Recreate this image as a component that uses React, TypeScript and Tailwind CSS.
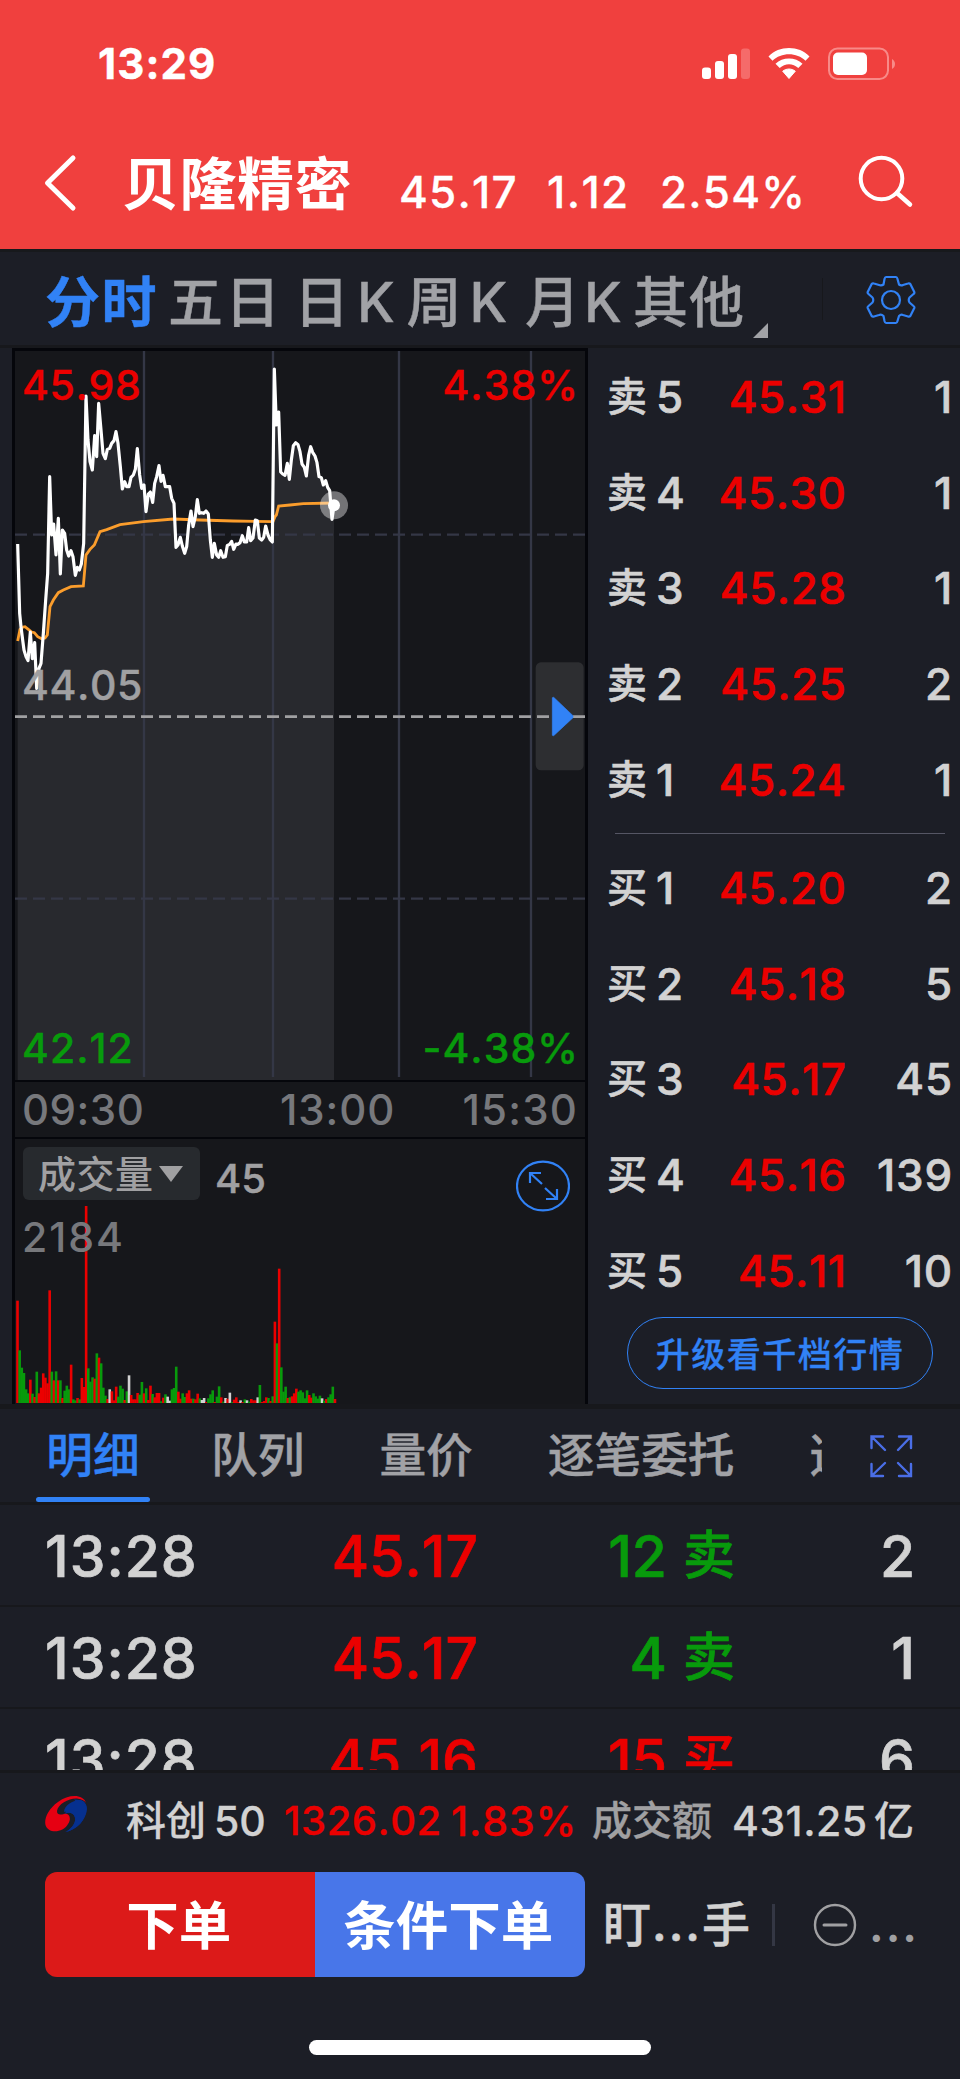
import type { ReactNode } from 'react';

type Level = { label: string; no: string; price: string; volume: string };

const SELL_LEVELS: Level[] = [
  { label: '卖', no: '5', price: '45.31', volume: '1' },
  { label: '卖', no: '4', price: '45.30', volume: '1' },
  { label: '卖', no: '3', price: '45.28', volume: '1' },
  { label: '卖', no: '2', price: '45.25', volume: '2' },
  { label: '卖', no: '1', price: '45.24', volume: '1' },
];

const BUY_LEVELS: Level[] = [
  { label: '买', no: '1', price: '45.20', volume: '2' },
  { label: '买', no: '2', price: '45.18', volume: '5' },
  { label: '买', no: '3', price: '45.17', volume: '45' },
  { label: '买', no: '4', price: '45.16', volume: '139' },
  { label: '买', no: '5', price: '45.11', volume: '10' },
];

const TRADES = [
  { time: '13:28', price: '45.17', amount: '12', side: '卖', count: '2' },
  { time: '13:28', price: '45.17', amount: '4', side: '卖', count: '1' },
  { time: '13:28', price: '45.16', amount: '15', side: '买', count: '6' },
];

// 分时价格线
const PRICE_POINTS =
  '53,612 59,820 63,860 68,900 72,930 78,950 84,962 91,876 97,956 104,908 110,1045 117,985 123,970 130,880 137,780 143,700 149,410 155,585 161,552 168,645 175,535 181,702 187,570 194,580 200,630 206,648 213,632 219,650 226,706 232,682 238,690 244,672 251,610 258,168 264,300 270,365 277,390 284,287 290,350 296,190 303,270 309,340 316,356 322,328 329,325 335,310 342,302 348,275 354,310 361,380 367,447 374,425 380,440 387,440 393,412 400,405 406,388 412,326 419,405 425,445 432,435 438,515 445,462 451,456 458,487 464,430 470,410 477,377 483,424 489,406 496,440 503,440 509,440 515,475 522,490 528,622 534,615 541,592 547,618 554,640 560,620 566,555 573,513 579,560 586,530 592,479 598,520 605,518 611,520 618,513 625,522 631,600 637,652 643,610 650,645 656,652 662,632 669,652 676,650 682,616 689,613 695,604 701,628 708,612 714,613 720,608 727,587 733,606 740,606 746,563 752,602 759,594 766,540 772,542 778,594 785,600 791,592 797,558 804,585 811,600 817,606 823,87 829,255 836,216 842,396 848,402 855,406 862,370 868,418 874,360 880,317 887,308 894,314 900,335 906,372 913,382 919,408 926,345 932,320 938,337 945,348 951,368 957,410 964,413 970,435 977,422 983,442 989,452 996,538 1002,496';

// 均价线
const AVERAGE_POINTS =
  '53,903 60,868 66,862 75,860 85,868 95,876 103,878 113,890 125,896 135,894 142,885 150,800 160,780 175,758 190,750 213,740 250,738 258,645 270,628 283,615 300,575 320,569 360,554 430,545 520,537 600,540 700,543 819,545 825,530 829,525 836,498 870,495 910,491 1002,489';

// R 涨 / G 跌 / W 平
const VOLUME_BARS =
  'R307 G158 G106 G90 G41 G29 R70 G28 R18 G94 R29 R46 R89 R76 R59 R338 G94 R68 G95 R68 G68 R15 G37 G52 G41 R115 G11 G8 R15 G11 R75 R48 R591 G104 G64 G77 R73 G149 R136 G119 G46 G22 R12 W41 R35 R8 R49 G19 G52 G43 R9 G35 W83 R24 R11 R11 R30 G25 G63 R29 G44 R9 R52 G27 R17 R30 R30 G5 R16 G26 W19 W7 G41 G45 G109 R34 R13 G29 G18 R29 R38 R13 G13 R11 R28 G14 W9 W15 R3 G14 G26 G38 R3 G19 G50 R17 G4 W15 R13 W31 G3 R10 R17 R3 W8 R3 G11 W8 G4 R12 R8 R8 W17 G54 R3 R6 R17 G15 R6 G20 R244 G179 R403 G107 G34 G49 R15 G17 R20 R29 R43 G34 G38 G32 G14 G38 R24 R16 G29 G20 G13 G22 W14 G7 R12 G17 G26 G49 R12'.split(
    ' '
  );

const BAR_COLORS: Record<string, string> = {
  R: '#eb0000',
  G: '#089a0c',
  W: '#d2d2d2',
};

const StatusBar = () => (
  <div className="flex h-32 items-center justify-between pl-[98px] pr-[64px]">
    <span className="text-[42px] font-bold tracking-[1.1px] [-webkit-text-stroke:0.4px]">
      13:29
    </span>
    <svg className="h-[34px] w-[194px]" viewBox="0 0 194 34">
      <rect x="0" y="20.500" width="9" height="11.500" rx="3" fill="#fff" />
      <rect x="13" y="14" width="9" height="18" rx="3" fill="#fff" />
      <rect x="26" y="7" width="9" height="25" rx="3" fill="#fff" />
      <rect x="39" y="1.500" width="9" height="30.500" rx="3" fill="#f56b6a" />
      <path
        d="M66.500 9.500C77-1.800 97-1.800 107.500 9.500L103.500 13.700C95 5 79 5 70.500 13.700Z"
        fill="#fff"
      />
      <path
        d="M73.500 16.800C80.500 9.800 93.500 9.800 100.500 16.800L96.300 21C91 15.900 83 15.900 77.700 21Z"
        fill="#fff"
      />
      <path
        d="M80.700 24.200C84.500 21.300 89.500 21.300 93.300 24.200L87 31.500Z"
        fill="#fff"
        stroke="#fff"
        strokeLinejoin="round"
      />
      <rect
        x="127"
        y="1.500"
        width="59"
        height="30.500"
        rx="8.500"
        fill="none"
        stroke="#f88a88"
        strokeWidth="2"
      />
      <rect x="131" y="5.500" width="34" height="22.500" rx="5" fill="#fff" />
      <path d="M190 12C194 14 194 20 190 22Z" fill="#f88a88" />
    </svg>
  </div>
);

const TitleBar = () => (
  <div className="flex h-[110px] items-center pl-[43px]">
    <svg className="h-[58px] w-9" viewBox="0 0 36 58" fill="none">
      <path
        d="M30 4L4.500 29L30 54"
        stroke="#fff"
        strokeWidth="5"
        strokeLinecap="round"
        strokeLinejoin="round"
      />
    </svg>
    <h1 className="ml-[43px] mt-[3px] w-[277px] whitespace-nowrap text-[57px] font-bold tracking-[0.5px]">
      贝隆精密
    </h1>
    <div className="mt-[18px] flex w-[450px] text-[44px] font-medium [-webkit-text-stroke:0.3px]">
      <span className="w-[148px] tracking-[1.2px]">45.17</span>
      <span className="w-[113px] tracking-[1.4px]">1.12</span>
      <span className="tracking-[1.2px]">2.54%</span>
    </div>
    <svg className="mb-1 ml-[8px] h-[56px] w-[58px]" viewBox="0 0 58 56">
      <circle
        cx="24.500"
        cy="25.500"
        r="20.800"
        fill="none"
        stroke="#fff"
        strokeWidth="4"
      />
      <path
        d="M40 40L53 51.500"
        stroke="#fff"
        strokeWidth="4.500"
        strokeLinecap="round"
      />
    </svg>
  </div>
);

const PeriodTabs = () => (
  <nav className="flex h-24 items-center border-b-[3px] border-[#17181c] pl-[45px]">
    <div className="mt-[7px] flex whitespace-nowrap text-[55px] font-medium text-[#a1a2a6] [-webkit-text-stroke:0.4px]">
      <span className="w-[123px] font-bold tracking-[1.5px] text-[#3182f6]">
        分时
      </span>
      <span className="w-[126px] tracking-[2px]">五日</span>
      <span className="flex w-[112.6px] gap-[8px]">
        <span>日</span>
        <span>K</span>
      </span>
      <span className="flex w-[118.4px] gap-[8px]">
        <span>周</span>
        <span>K</span>
      </span>
      <span className="flex w-[108px] gap-[4px]">
        <span>月</span>
        <span>K</span>
      </span>
      <span className="tracking-[1px]">其他</span>
    </div>
    <svg className="ml-[8px] mt-[64px] h-[15px] w-[15px]" viewBox="0 0 15 15">
      <path d="M15 0V15H0Z" fill="#a1a2a6" />
    </svg>
    <span className="ml-[54px] h-[42px] w-px bg-[#17181c]" />
    <svg
      className="ml-[43px] mt-[3px] h-[50px] w-[50px]"
      viewBox="0 0 50 50"
      fill="none"
      stroke="#3182f6"
      strokeWidth="2.200"
      strokeLinejoin="round"
    >
      <path d="M20 2H30Q31 2 31.500 4L33 9.500Q35 11 37 10L42 8.500Q43.500 8 44.300 9L48.300 17Q48.700 18.200 47.500 19L43.500 22.500Q42 25 43.500 27.500L47.500 31Q48.700 32 48.300 33L44.300 41Q43.500 42 42 41.500L37 40Q35 39 33 41L31.500 46Q31 48 30 48H20Q19 48 18.500 46L17.500 41Q15.500 39 13 40L8 41.500Q6.500 42 5.700 41L1.700 33Q1.300 32 2.500 31L6.500 27.500Q8 25 6.500 22.500L2.500 19Q1.300 18 1.700 17L5.700 9Q6.500 8 8 8.500L13 10Q15.500 11 17.500 9.500L18.500 4Q19 2 20 2Z" />
      <circle cx="25" cy="25" r="9" />
    </svg>
  </nav>
);

const PriceChart = () => (
  <div className="relative h-[729px] text-[41px] font-medium tracking-[0.6px] [-webkit-text-stroke:0.4px]">
    <svg className="h-[729px] w-[570px]" viewBox="45 33 1710 2187" fill="none">
      <polygon points={`53,2220 ${PRICE_POINTS} 1002,2220`} fill="#28292e" />
      <g stroke="#343746" strokeWidth="7">
        <path d="M432 33V2211M819 33V2211M1197 33V2211M1593 33V2211" />
        <path d="M45 584H1755M45 1676H1755" strokeDasharray="36 18" />
      </g>
      <rect x="1607" y="967" width="144" height="324" rx="16" fill="#2d2e31" />
      <path
        d="M45 1130H1755"
        stroke="#a0a0a2"
        strokeWidth="8"
        strokeDasharray="36 18"
      />
      <polyline points={AVERAGE_POINTS} stroke="#fb9d2c" strokeWidth="8.5" />
      <polyline
        points={PRICE_POINTS}
        stroke="#fff"
        strokeWidth="9.5"
        strokeLinejoin="round"
      />
      <circle cx="1002" cy="496" r="42" fill="#fff" fillOpacity="0.4" />
      <circle cx="1002" cy="496" r="18" fill="#fff" />
      <path
        d="M1657 1073L1661 1072L1719 1127V1133L1661 1187L1657 1186Z"
        fill="#3182f6"
        stroke="#3182f6"
        strokeWidth="2"
      />
    </svg>
    <span className="absolute left-[7px] top-[14px] text-[#eb0000]">45.98</span>
    <span className="absolute right-[6px] top-[14px] tracking-[1px] text-[#eb0000]">
      4.38%
    </span>
    <span className="absolute left-[7px] top-[314px] text-[#a0a0a2]">
      44.05
    </span>
    <span className="absolute bottom-[11px] left-[7px] tracking-[1px] text-[#089a0c]">
      42.12
    </span>
    <span className="absolute bottom-[11px] right-[6px] tracking-[1px] text-[#089a0c]">
      -4.38%
    </span>
  </div>
);

const VolumeChart = () => (
  <div className="relative h-[265px]">
    <svg className="h-[265px] w-[570px]" viewBox="0 0 570 265">
      {VOLUME_BARS.map((bar, i) => {
        const height = Number(bar.slice(1)) / 3;
        return (
          <rect
            key={i}
            x={1.2 + i * 2.145}
            y={264 - height}
            width="2.6"
            height={height}
            fill={BAR_COLORS[bar[0]]}
          />
        );
      })}
    </svg>
    <div className="absolute left-[8px] top-[8px] flex h-[53px] w-[177px] items-center rounded-md bg-[#272a2e] pl-[15px] text-[38px] font-medium text-[#a0a0a2]">
      <span className="whitespace-nowrap tracking-[0.5px]">成交量</span>
      <svg className="ml-[5px] h-4 w-6" viewBox="0 0 24 16">
        <path d="M0 0H24L12 16Z" fill="#a0a0a2" />
      </svg>
    </div>
    <span className="absolute left-[200px] top-[20px] text-[40px] font-medium text-[#a0a0a2] [-webkit-text-stroke:0.4px]">
      45
    </span>
    <span className="absolute left-[7px] top-[78px] text-[41px] font-medium tracking-[2px] text-[#77787c]">
      2184
    </span>
    <svg
      className="absolute right-[15px] top-[21px] h-[52px] w-[54px]"
      viewBox="0 0 54 52"
      fill="none"
      stroke="#3182f6"
      strokeWidth="2.200"
    >
      <ellipse cx="27" cy="26" rx="26" ry="24.300" />
      <path d="M26 24L14 13M14 23V13H25M29 28L41 39M41 29V39H30" />
    </svg>
  </div>
);

const LevelRow = ({ label, no, price, volume }: Level) => (
  <div className="flex h-[95.8px] items-center text-[44px] font-medium text-[#d2d2d2] [-webkit-text-stroke:0.6px]">
    <span className="w-[49px] text-[40px]">{label}</span>
    <span className="w-[40px]">{no}</span>
    <span className="w-[150.5px] text-right tracking-[0.5px] text-[#eb0000]">
      {price}
    </span>
    <span className="w-[106.5px] text-right tracking-[0.8px]">{volume}</span>
  </div>
);

const OrderBook = () => (
  <section className="flex-1 pl-[19px] pt-px">
    {SELL_LEVELS.map((level) => (
      <LevelRow key={level.no} {...level} />
    ))}
    <div className="mb-[6px] ml-[8px] mt-[5px] h-px w-[330px] bg-[#555664]" />
    {BUY_LEVELS.map((level) => (
      <LevelRow key={level.no} {...level} />
    ))}
    <button className="-mt-[1.5px] ml-[20px] flex h-[72px] w-[306px] items-center justify-center rounded-full border-[1.5px] border-[#3182f6] pt-[3px] text-[34px] font-medium tracking-[1.5px] text-[#3182f6] [-webkit-text-stroke:0.3px]">
      升级看千档行情
    </button>
  </section>
);

const DetailTab = ({ children }: { children: ReactNode }) => (
  <span className="shrink-0 whitespace-nowrap">{children}</span>
);

const DetailTabs = () => (
  <nav className="flex h-24 items-stretch border-b-[3px] border-[#17181c] pl-9 text-[46.7px] font-medium text-[#a1a2a6] [-webkit-text-stroke:0.4px]">
    <div className="flex w-[786px] items-center gap-[75px] overflow-hidden">
      <div className="relative -mr-[14px] flex h-full w-[114px] shrink-0 items-center justify-center whitespace-nowrap text-[#3182f6]">
        明细
        <span className="absolute bottom-0 left-0 h-[5px] w-full rounded-full bg-[#3182f6]" />
      </div>
      <DetailTab>队列</DetailTab>
      <DetailTab>量价</DetailTab>
      <DetailTab>逐笔委托</DetailTab>
      <DetailTab>逐笔</DetailTab>
    </div>
    <svg
      className="ml-[47px] self-center"
      width="44"
      height="44"
      viewBox="0 0 44 44"
      fill="none"
      stroke="#4a6ee6"
      strokeWidth="2.400"
      strokeLinecap="round"
    >
      <path d="M16 16L2.500 2.500M2.500 14V2.500H14M29 16L42 2.500M30 2.500H42V14M16 29L2.500 42M2.500 30V42H14M29 29L42 42M42 30V42H30" />
    </svg>
  </nav>
);

const TradeList = () => (
  <section className="h-[268px] overflow-hidden border-b-[3px] border-[#17181c]">
    {TRADES.map((trade, i) => (
      <div
        key={i}
        className="flex h-[102px] items-center border-b-2 border-[#17181c] pl-[45px] pt-[2px] text-[57px] font-medium text-[#d2d2d2] [-webkit-text-stroke:0.7px]"
      >
        <span className="w-[230px] tracking-[1px]">{trade.time}</span>
        <span className="w-[203px] text-right text-[#eb0000]">
          {trade.price}
        </span>
        <span
          className={`flex w-[257px] items-center justify-end gap-[16px] ${
            trade.side === '卖' ? 'text-[#089a0c]' : 'text-[#eb0000]'
          }`}
        >
          <span>{trade.amount}</span>
          <span className="text-[52px]">{trade.side}</span>
        </span>
        <span className="w-[180px] text-right">{trade.count}</span>
      </div>
    ))}
  </section>
);

const IndexBar = () => (
  <div className="flex h-[94px] items-center whitespace-nowrap pl-[45px] pt-[2px] text-[41px] font-medium text-[#d2d2d2] [-webkit-text-stroke:0.3px]">
    <svg className="-mt-[14px] h-[38px] w-[42px]" viewBox="0 0 42 38">
      <path
        d="M20 19C26 16 29 19 30 23C31 28 27 34 20 37C32 35 41 25 42 14C42 7 36 4 29 4.500C34 8 22 12 20 19Z"
        fill="#06308f"
      />
      <path
        d="M41 8C38-1 24-1 13 7C3 14-1 24 0.500 30C3 39 18 38 23 29C27 23 24 18 19 19C15 20 12 20 12 16C13 9 24 3 32 3.500C37 4 40 6 41 8Z"
        fill="#e60012"
      />
      <path
        d="M18 19C22 19 22 16 19 17C19 11 27 5 36 5C42 7 42 14 41 18C38 28 30 35 21 37C28 32 31 27 30 22C28 17 23 17 18 19Z"
        fill="#06308f"
      />
    </svg>
    <span className="ml-[39px] w-[88px] text-[40px]">科创</span>
    <span className="w-[70px] text-[41px]">50</span>
    <span className="w-[167px] text-[40px] tracking-[0.5px] text-[#eb0000]">
      1326.02
    </span>
    <span className="w-[141px] text-[41px] tracking-[0.9px] text-[#eb0000]">
      1.83%
    </span>
    <span className="w-[140px] text-[40px] text-[#a0a0a2]">成交额</span>
    <span className="w-[142px] text-[41px] tracking-[0.5px]">431.25</span>
    <span className="text-[40px]">亿</span>
  </div>
);

const ActionBar = () => (
  <div className="mt-[5px] flex h-[105px] items-center whitespace-nowrap pl-[45px]">
    <div className="flex h-full w-[540px] overflow-hidden rounded-xl text-[52.5px] font-bold text-white">
      <button className="flex-1 bg-[#dc1a19] pr-[2px] pt-[3px]">下单</button>
      <button className="flex-1 bg-[#4876e9] pr-[3px] pt-[3px]">条件下单</button>
    </div>
    <div className="ml-[18px] flex w-[169px] text-[48px] font-medium text-[#d2d2d2] [-webkit-text-stroke:0.5px]">
      盯
      <span className="w-[51px] pl-px text-[46px] font-semibold tracking-[2px]">
        ...
      </span>
      手
    </div>
    <span className="h-[42px] w-[3px] bg-[#343744]" />
    <svg className="ml-[37px] h-[46px] w-[46px]" viewBox="0 0 46 46" fill="none">
      <circle cx="23" cy="23" r="20" stroke="#a0a0a2" strokeWidth="2.400" />
      <path d="M12 23H34" stroke="#a0a0a2" strokeWidth="3" strokeLinecap="round" />
    </svg>
    <span className="ml-[11px] text-[46px] font-semibold tracking-[2px] text-[#a0a0a2]">
      ...
    </span>
  </div>
);

const App = () => (
  <div className="flex h-[2079px] w-[960px] flex-col overflow-hidden bg-[#1c1e26] leading-none [font-family:Inter,'Noto_Sans_CJK_SC',sans-serif] [font-kerning:none]">
    <header className="h-[249px] bg-[#f0403e] text-white">
      <StatusBar />
      <TitleBar />
    </header>
    <div className="border-t-[3px] border-[#17191c]">
      <PeriodTabs />
    </div>
    <main className="flex h-[1056px]">
      <section className="ml-3 w-[576px] border-x-[3px] border-t-[3px] border-[#05060b] bg-[#16171b]">
        <PriceChart />
        <div className="flex h-[59px] items-center border-y-[2.5px] border-[#05060b] px-[7px] text-[42px] font-medium tracking-[0.5px] text-[#77787c]">
          <span className="w-[258px]">09:30</span>
          <span className="flex-1 tracking-[0.9px]">13:00</span>
          <span className="tracking-[1.2px]">15:30</span>
        </div>
        <VolumeChart />
      </section>
      <OrderBook />
    </main>
    <div className="h-[5px] bg-[#17181c]" />
    <DetailTabs />
    <TradeList />
    <IndexBar />
    <ActionBar />
    <div className="mx-auto mt-[63px] h-[15px] w-[342px] rounded-full bg-white" />
  </div>
);

export default App;
